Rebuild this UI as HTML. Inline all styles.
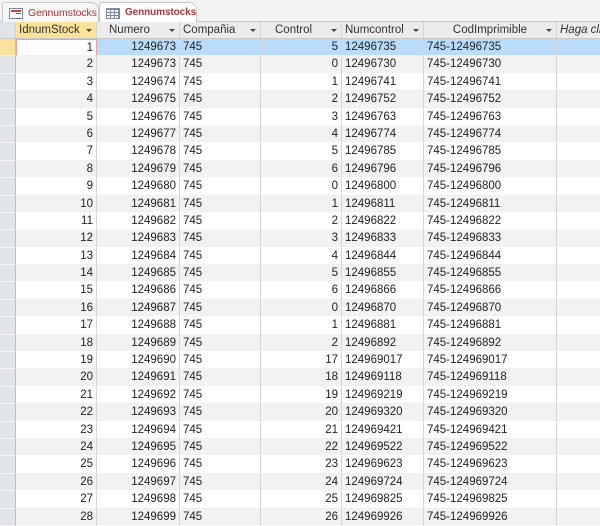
<!DOCTYPE html>
<html><head><meta charset="utf-8"><style>
*{margin:0;padding:0;box-sizing:border-box}
body{width:600px;height:524px;overflow:hidden;background:#fff;font-family:"Liberation Sans",sans-serif;font-size:11.5px;color:#222;position:relative}
.tabbar{position:absolute;left:0;top:0;width:600px;height:22px;background:#f3f3f3;border-bottom:1px solid #c9c9c9}
.tab{position:absolute;top:2px;height:20px;border:1px solid #c6c6c6;border-bottom:none;border-radius:3px 8px 0 0;color:#a4373a;font-size:10.5px;line-height:20px;padding-left:25px;white-space:nowrap;overflow:hidden;letter-spacing:-0.1px}
.t1{left:2px;width:97px;background:#f7f7f7;font-weight:normal}
.t2{left:99px;width:98px;background:#fff;font-weight:bold;height:21px;font-size:10px}
.ic{position:absolute;left:6px;top:5px;width:14px;height:11px;border:1px solid #7a8aa8;background:#fff}
.ic.a:before{content:"";position:absolute;left:1px;top:1px;width:10px;height:2px;background:#c44}
.ic.a:after{content:"";position:absolute;left:6px;top:4px;width:5px;height:4px;border-top:1px solid #666;border-bottom:1px solid #666}
.ic.b{background:repeating-linear-gradient(90deg,transparent 0 3px,#7a8aa8 3px 4px),repeating-linear-gradient(0deg,#fff 0 2px,#7a8aa8 2px 3px)}
.hdr{position:absolute;top:22px;left:0;width:600px;height:17px;background:#ececec;border-bottom:1px solid #c8c8c8}
.c{position:absolute;top:0;height:100%;border-right:1px solid #d4d4d4;white-space:nowrap;overflow:hidden;padding:0 3px;line-height:17px}
.hdr .c{font-size:11.5px;color:#333}
.dd{position:absolute;right:4px;top:7px;width:0;height:0;border-left:3px solid transparent;border-right:3px solid transparent;border-top:3px solid #444}
.rows{position:absolute;top:39px;left:0;width:600px}
.r{position:relative;height:17.4px;background:#fff}
.r:nth-child(even){background:#f2f2f2}
.r .c{border-bottom:1px solid #fff}
.r:nth-child(odd) .c{border-bottom:1px solid #f0f0f0}
.sel{position:absolute;left:0;width:16px;height:100%;background:#e1e4e9;border-right:1px solid #b9bdc4;border-bottom:1px solid #f5f5f5}
.x0{left:0;width:16px}
.x1{left:16px;width:81px;text-align:right}
.x2{left:97px;width:83px;text-align:right}
.x3{left:180px;width:81px}
.x4{left:261px;width:81px;text-align:right}
.x5{left:342px;width:82px}
.x6{left:424px;width:133px}
.x7{left:557px;width:60px}
.hdr .x1{background:#fbe29b;text-align:left;padding-left:3px}
.hdr .x2,.hdr .x4{text-align:left;padding-left:12px}
.hdr .x6{text-align:center}
.r1{background:#b9dcfb!important}
.r1 .x1{background:#fff;border:1px solid #f0a0a0}
.r1 .sel{background:#fbe29b}
</style></head><body>
<div class="tabbar">
<div class="tab t1"><span class="ic a"></span>Gennumstocks</div>
<div class="tab t2"><span class="ic b"></span>Gennumstocks</div>
</div>
<div class="hdr">
<div class="c x0" style="background:#e1e4e9"></div>
<div class="c x1">IdnumStock<span class="dd"></span></div>
<div class="c x2">Numero<span class="dd"></span></div>
<div class="c x3">Compañia<span class="dd"></span></div>
<div class="c x4" style="padding-left:14px">Control<span class="dd"></span></div>
<div class="c x5">Numcontrol<span class="dd"></span></div>
<div class="c x6">CodImprimible<span class="dd"></span></div>
<div class="c x7" style="font-style:italic">Haga clic</div>
</div>
<div class="rows">
<div class="r r1"><div class="sel"></div><div class="c x1">1</div><div class="c x2">1249673</div><div class="c x3">745</div><div class="c x4">5</div><div class="c x5">12496735</div><div class="c x6">745-12496735</div><div class="c x7"></div></div>
<div class="r"><div class="sel"></div><div class="c x1">2</div><div class="c x2">1249673</div><div class="c x3">745</div><div class="c x4">0</div><div class="c x5">12496730</div><div class="c x6">745-12496730</div><div class="c x7"></div></div>
<div class="r"><div class="sel"></div><div class="c x1">3</div><div class="c x2">1249674</div><div class="c x3">745</div><div class="c x4">1</div><div class="c x5">12496741</div><div class="c x6">745-12496741</div><div class="c x7"></div></div>
<div class="r"><div class="sel"></div><div class="c x1">4</div><div class="c x2">1249675</div><div class="c x3">745</div><div class="c x4">2</div><div class="c x5">12496752</div><div class="c x6">745-12496752</div><div class="c x7"></div></div>
<div class="r"><div class="sel"></div><div class="c x1">5</div><div class="c x2">1249676</div><div class="c x3">745</div><div class="c x4">3</div><div class="c x5">12496763</div><div class="c x6">745-12496763</div><div class="c x7"></div></div>
<div class="r"><div class="sel"></div><div class="c x1">6</div><div class="c x2">1249677</div><div class="c x3">745</div><div class="c x4">4</div><div class="c x5">12496774</div><div class="c x6">745-12496774</div><div class="c x7"></div></div>
<div class="r"><div class="sel"></div><div class="c x1">7</div><div class="c x2">1249678</div><div class="c x3">745</div><div class="c x4">5</div><div class="c x5">12496785</div><div class="c x6">745-12496785</div><div class="c x7"></div></div>
<div class="r"><div class="sel"></div><div class="c x1">8</div><div class="c x2">1249679</div><div class="c x3">745</div><div class="c x4">6</div><div class="c x5">12496796</div><div class="c x6">745-12496796</div><div class="c x7"></div></div>
<div class="r"><div class="sel"></div><div class="c x1">9</div><div class="c x2">1249680</div><div class="c x3">745</div><div class="c x4">0</div><div class="c x5">12496800</div><div class="c x6">745-12496800</div><div class="c x7"></div></div>
<div class="r"><div class="sel"></div><div class="c x1">10</div><div class="c x2">1249681</div><div class="c x3">745</div><div class="c x4">1</div><div class="c x5">12496811</div><div class="c x6">745-12496811</div><div class="c x7"></div></div>
<div class="r"><div class="sel"></div><div class="c x1">11</div><div class="c x2">1249682</div><div class="c x3">745</div><div class="c x4">2</div><div class="c x5">12496822</div><div class="c x6">745-12496822</div><div class="c x7"></div></div>
<div class="r"><div class="sel"></div><div class="c x1">12</div><div class="c x2">1249683</div><div class="c x3">745</div><div class="c x4">3</div><div class="c x5">12496833</div><div class="c x6">745-12496833</div><div class="c x7"></div></div>
<div class="r"><div class="sel"></div><div class="c x1">13</div><div class="c x2">1249684</div><div class="c x3">745</div><div class="c x4">4</div><div class="c x5">12496844</div><div class="c x6">745-12496844</div><div class="c x7"></div></div>
<div class="r"><div class="sel"></div><div class="c x1">14</div><div class="c x2">1249685</div><div class="c x3">745</div><div class="c x4">5</div><div class="c x5">12496855</div><div class="c x6">745-12496855</div><div class="c x7"></div></div>
<div class="r"><div class="sel"></div><div class="c x1">15</div><div class="c x2">1249686</div><div class="c x3">745</div><div class="c x4">6</div><div class="c x5">12496866</div><div class="c x6">745-12496866</div><div class="c x7"></div></div>
<div class="r"><div class="sel"></div><div class="c x1">16</div><div class="c x2">1249687</div><div class="c x3">745</div><div class="c x4">0</div><div class="c x5">12496870</div><div class="c x6">745-12496870</div><div class="c x7"></div></div>
<div class="r"><div class="sel"></div><div class="c x1">17</div><div class="c x2">1249688</div><div class="c x3">745</div><div class="c x4">1</div><div class="c x5">12496881</div><div class="c x6">745-12496881</div><div class="c x7"></div></div>
<div class="r"><div class="sel"></div><div class="c x1">18</div><div class="c x2">1249689</div><div class="c x3">745</div><div class="c x4">2</div><div class="c x5">12496892</div><div class="c x6">745-12496892</div><div class="c x7"></div></div>
<div class="r"><div class="sel"></div><div class="c x1">19</div><div class="c x2">1249690</div><div class="c x3">745</div><div class="c x4">17</div><div class="c x5">124969017</div><div class="c x6">745-124969017</div><div class="c x7"></div></div>
<div class="r"><div class="sel"></div><div class="c x1">20</div><div class="c x2">1249691</div><div class="c x3">745</div><div class="c x4">18</div><div class="c x5">124969118</div><div class="c x6">745-124969118</div><div class="c x7"></div></div>
<div class="r"><div class="sel"></div><div class="c x1">21</div><div class="c x2">1249692</div><div class="c x3">745</div><div class="c x4">19</div><div class="c x5">124969219</div><div class="c x6">745-124969219</div><div class="c x7"></div></div>
<div class="r"><div class="sel"></div><div class="c x1">22</div><div class="c x2">1249693</div><div class="c x3">745</div><div class="c x4">20</div><div class="c x5">124969320</div><div class="c x6">745-124969320</div><div class="c x7"></div></div>
<div class="r"><div class="sel"></div><div class="c x1">23</div><div class="c x2">1249694</div><div class="c x3">745</div><div class="c x4">21</div><div class="c x5">124969421</div><div class="c x6">745-124969421</div><div class="c x7"></div></div>
<div class="r"><div class="sel"></div><div class="c x1">24</div><div class="c x2">1249695</div><div class="c x3">745</div><div class="c x4">22</div><div class="c x5">124969522</div><div class="c x6">745-124969522</div><div class="c x7"></div></div>
<div class="r"><div class="sel"></div><div class="c x1">25</div><div class="c x2">1249696</div><div class="c x3">745</div><div class="c x4">23</div><div class="c x5">124969623</div><div class="c x6">745-124969623</div><div class="c x7"></div></div>
<div class="r"><div class="sel"></div><div class="c x1">26</div><div class="c x2">1249697</div><div class="c x3">745</div><div class="c x4">24</div><div class="c x5">124969724</div><div class="c x6">745-124969724</div><div class="c x7"></div></div>
<div class="r"><div class="sel"></div><div class="c x1">27</div><div class="c x2">1249698</div><div class="c x3">745</div><div class="c x4">25</div><div class="c x5">124969825</div><div class="c x6">745-124969825</div><div class="c x7"></div></div>
<div class="r"><div class="sel"></div><div class="c x1">28</div><div class="c x2">1249699</div><div class="c x3">745</div><div class="c x4">26</div><div class="c x5">124969926</div><div class="c x6">745-124969926</div><div class="c x7"></div></div>
</div>
</body></html>
